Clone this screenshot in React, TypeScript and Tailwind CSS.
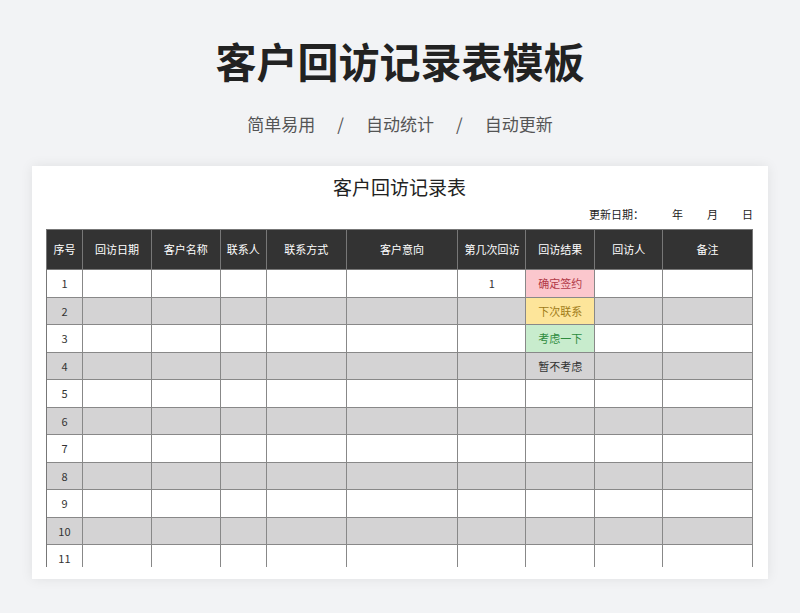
const cols = [36, 69, 69, 46, 80, 112, 68, 69, 68, 90];
const heads = ["序号", "回访日期", "客户名称", "联系人", "联系方式", "客户意向", "第几次回访", "回访结果", "回访人", "备注"];
const results: Record<number, { t: string; c: string }> = {
  1: { t: "确定签约", c: "bg-[#fbc7cd] text-[#b23a48]" },
  2: { t: "下次联系", c: "bg-[#fde59a] text-[#a07b18]" },
  3: { t: "考虑一下", c: "bg-[#c8eccd] text-[#2e8b3e]" },
  4: { t: "暂不考虑", c: "text-[#333]" },
};

export default function App() {
  return (
    <div className="w-[800px] h-[613px] bg-[#f2f3f5] overflow-hidden" style={{ fontFamily: '"Noto Sans CJK SC", "Noto Sans", sans-serif' }}>
      <h1 className="pt-[34px] text-center text-[41px] font-bold leading-[52px] text-[#222]">客户回访记录表模板</h1>
      <div className="mt-[26px] flex justify-center gap-[22px] text-[17px] leading-[24px] text-[#555]">
        <span>简单易用</span><span>/</span><span>自动统计</span><span>/</span><span>自动更新</span>
      </div>
      <div className="mx-auto mt-[30px] w-[736px] h-[413px] bg-white shadow-[0_0_12px_rgba(0,0,0,0.08)] pl-[14px] overflow-hidden">
        <div className="w-[707px] h-[401px] overflow-hidden">
          <div className="pt-[8px] text-center text-[19px] leading-[26px] text-[#222]">客户回访记录表</div>
          <div className="mt-[6px] flex justify-end text-[11px] leading-[16px] text-[#222]">
            <span>更新日期：</span><span className="ml-[28px]">年</span><span className="ml-[24px]">月</span><span className="ml-[24px]">日</span>
          </div>
          <div className="mt-[7px] border-l border-t border-[#777]">
            <div className="flex bg-[#333] text-white text-[11px]">
              {heads.map((h, i) => (
                <div key={h} style={{ width: cols[i] }} className="h-[40px] flex items-center justify-center border-r border-b border-[#777]">{h}</div>
              ))}
            </div>
            {Array.from({ length: 11 }, (_, r) => r + 1).map((n) => (
              <div key={n} className={`flex text-[11px] text-[#333] ${n % 2 === 0 ? "bg-[#d4d3d4]" : "bg-white"}`}>
                {cols.map((w, i) => {
                  let content: string = "";
                  let extra = "";
                  if (i === 0) content = String(n);
                  if (i === 6 && n === 1) content = "1";
                  if (i === 7 && results[n]) { content = results[n].t; extra = results[n].c; }
                  return (
                    <div key={i} style={{ width: w }} className={`h-[27.5px] flex items-center justify-center border-r border-b border-[#888] ${extra}`}>{content}</div>
                  );
                })}
              </div>
            ))}
          </div>
        </div>
      </div>
    </div>
  );
}
